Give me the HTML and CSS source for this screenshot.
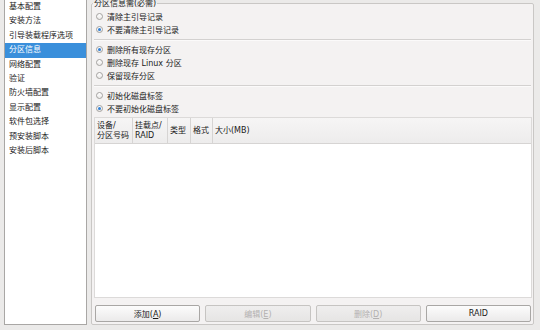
FILE: index.html
```html
<!DOCTYPE html>
<html lang="zh-CN">
<head>
    <meta charset="UTF-8">
    <title>分区信息</title>
    <link rel="stylesheet" href="styles.css">
</head>
<body>
    <div class="window">
        <ul class="sidebar">
            <li>基本配置</li>
            <li>安装方法</li>
            <li>引导装载程序选项</li>
            <li class="selected">分区信息</li>
            <li>网络配置</li>
            <li>验证</li>
            <li>防火墙配置</li>
            <li>显示配置</li>
            <li>软件包选择</li>
            <li>预安装脚本</li>
            <li>安装后脚本</li>
        </ul>

        <fieldset class="panel">
            <legend>分区信息需(必需)</legend>

            <div class="radio-group">
                <label class="radio"><input type="radio" name="mbr"> 清除主引导记录</label>
                <label class="radio"><input type="radio" name="mbr" checked> 不要清除主引导记录</label>
            </div>

            <div class="radio-group">
                <label class="radio"><input type="radio" name="parts" checked> 删除所有现存分区</label>
                <label class="radio"><input type="radio" name="parts"> 删除现存 Linux 分区</label>
                <label class="radio"><input type="radio" name="parts"> 保留现存分区</label>
            </div>

            <div class="radio-group last">
                <label class="radio"><input type="radio" name="label"> 初始化磁盘标签</label>
                <label class="radio"><input type="radio" name="label" checked> 不要初始化磁盘标签</label>
            </div>

            <div class="table">
                <div class="table-head">
                    <div class="col col-dev">设备/<br>分区号码</div>
                    <div class="col col-mount">挂载点/<br>RAID</div>
                    <div class="col col-type">类型</div>
                    <div class="col col-format">格式</div>
                    <div class="col col-size">大小(MB)</div>
                </div>
                <div class="table-body"></div>
            </div>

            <div class="buttons">
                <button type="button">添加(<u>A</u>)</button>
                <button type="button" disabled>编辑(<u>E</u>)</button>
                <button type="button" disabled>删除(<u>D</u>)</button>
                <button type="button">RAID</button>
            </div>
        </fieldset>
    </div>
</body>
</html>
```

FILE: styles.css
```css
body {
    margin: 0;
    background-color: #ebeae9;
    font-family: "DejaVu Sans", "Noto Sans CJK SC", sans-serif;
    font-size: 8px;
    color: #1a1a1a;
    overflow: hidden;
}

.window {
    display: flex;
    gap: 4px;
    padding: 0 6px 0 4px;
    height: 330px;
}

/* left navigation list */
.sidebar {
    list-style: none;
    margin: -1px 0 0 0;
    padding: 0;
    width: 81px;
    height: 324px;
    background-color: #fff;
    border: 1px solid #a9a7a5;
}

.sidebar li {
    height: 14.4px;
    line-height: 14.4px;
    padding-left: 4px;
    white-space: nowrap;
}

.sidebar li.selected {
    background-color: #3a8fdb;
    color: #fff;
}

/* right panel */
.panel {
    flex: 1;
    margin: -1px 0 0 0;
    padding: 0 1px 2px 2px;
    height: 322px;
    border: 1px solid #c9c7c5;
    border-radius: 2px;
    background-color: #f4f2f2;
    display: flex;
    flex-direction: column;
}

.panel legend {
    padding: 0 1px;
    margin-left: -1px;
    line-height: 9px;
    height: 9px;
}

.radio-group {
    display: flex;
    flex-direction: column;
    padding: 3px 0 3px 0;
    border-bottom: 1px solid #d3d1d0;
    box-shadow: 0 1px 0 #fbfafa;
    margin-right: 1px;
}

.radio-group:first-of-type {
    padding-top: 2px;
}

.radio-group.last {
    border-bottom: none;
    box-shadow: none;
    padding-bottom: 2px;
}

.radio {
    display: flex;
    align-items: center;
    gap: 4px;
    height: 13px;
    padding-left: 2px;
    white-space: nowrap;
}

.radio input {
    appearance: none;
    margin: 0;
    width: 7px;
    height: 7px;
    border: 1px solid #a3a19f;
    border-radius: 50%;
    background: linear-gradient(#ffffff, #eceae9);
    box-sizing: border-box;
    display: grid;
    place-items: center;
}

.radio input:checked::after {
    content: "";
    width: 3px;
    height: 3px;
    border-radius: 50%;
    background-color: #2f7fd6;
}

/* partition table */
.table {
    flex: 1;
    display: flex;
    flex-direction: column;
    border: 1px solid #dcdad9;
    background-color: #fff;
}

.table-head {
    display: flex;
    height: 25px;
    background: linear-gradient(#f6f5f5, #edecec);
    border-bottom: 1px solid #d6d4d3;
}

.col {
    display: flex;
    flex-direction: column;
    justify-content: center;
    padding-left: 2px;
    line-height: 10px;
    border-right: 1px solid #d6d4d3;
    white-space: nowrap;
    box-sizing: border-box;
}

.col-dev { width: 38px; }
.col-mount { width: 35px; }
.col-type { width: 23px; }
.col-format { width: 22px; }
.col-size { flex: 1; border-right: none; }

.table-body {
    flex: 1;
}

/* bottom buttons */
.buttons {
    display: grid;
    grid-template-columns: repeat(4, 1fr);
    gap: 5px;
    padding: 7px 1px 0 1px;
}

.buttons button {
    height: 17px;
    font-family: inherit;
    font-size: 8px;
    color: #1a1a1a;
    border: 1px solid #a9a7a5;
    border-radius: 2px;
    background: linear-gradient(#fcfcfc, #ebeaea);
    padding: 0;
}

.buttons button:disabled {
    color: #b3b1b0;
    border-color: #c6c4c2;
    background: linear-gradient(#efeeee, #e6e5e4);
}
```
